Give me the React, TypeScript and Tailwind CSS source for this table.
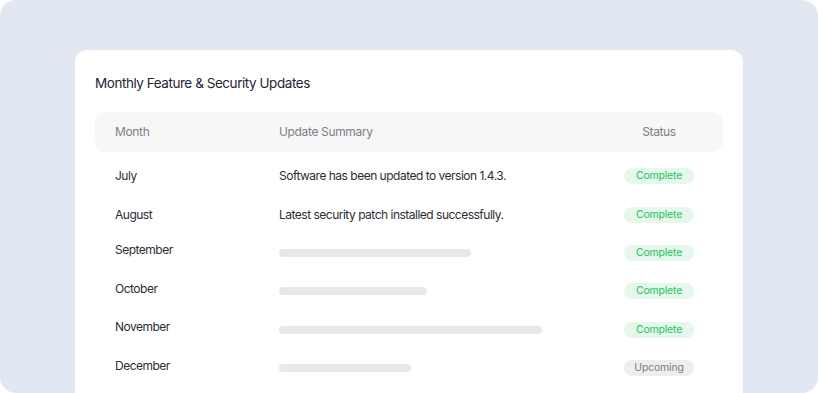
const rows = [
  { month: "July", summary: "Software has been updated to version 1.4.3.", status: "Complete" },
  { month: "August", summary: "Latest security patch installed successfully.", status: "Complete" },
  { month: "September", bar: 192, status: "Complete" },
  { month: "October", bar: 148, status: "Complete" },
  { month: "November", bar: 263, status: "Complete" },
  { month: "December", bar: 132, status: "Upcoming" },
];

export default function App() {
  return (
    <div className="h-[393px] w-[818px] bg-white font-['Inter','Liberation_Sans',sans-serif]">
      <div className="h-full w-full overflow-hidden rounded-2xl bg-[#e1e8f2] px-[75px] pt-[50px]">
        <div className="h-[360px] rounded-xl bg-white px-5 pt-[23px]">
          <h1 className="text-[13.5px] leading-5 tracking-[-0.45px] text-[#1f2633]">
            Monthly Feature &amp; Security Updates
          </h1>

          <div className="mt-[19px] grid h-10 grid-cols-[164px_1fr_88px] items-center rounded-xl bg-[#f7f7f8] px-5 text-[12px] tracking-[-0.35px] text-[#7a7f88]">
            <span>Month</span>
            <span>Update Summary</span>
            <span className="text-center">Status</span>
          </div>

          <div className="mt-[5px]">
            {rows.map((r) => (
              <div
                key={r.month}
                className="grid h-[38.4px] grid-cols-[164px_1fr_88px] items-center px-5 text-[12px] tracking-[-0.5px] text-[#2a2e35]"
              >
                <span className={r.bar ? "mb-[5px]" : ""}>{r.month}</span>
                {r.summary ? (
                  <span>{r.summary}</span>
                ) : (
                  <div className="h-2 rounded-full bg-[#e8e8e9]" style={{ width: r.bar }} />
                )}
                <div className="flex justify-center">
                  <span
                    className={
                      r.status === "Complete"
                        ? "flex h-4 w-[70px] items-center justify-center rounded-full bg-[#e5f8eb] text-[10.5px] tracking-[-0.2px] text-[#22c35e]"
                        : "flex h-4 w-[70px] items-center justify-center rounded-full bg-[#eeeeef] text-[10.5px] tracking-[-0.2px] text-[#7c7f86]"
                    }
                  >
                    {r.status}
                  </span>
                </div>
              </div>
            ))}
          </div>
        </div>
      </div>
    </div>
  );
}
